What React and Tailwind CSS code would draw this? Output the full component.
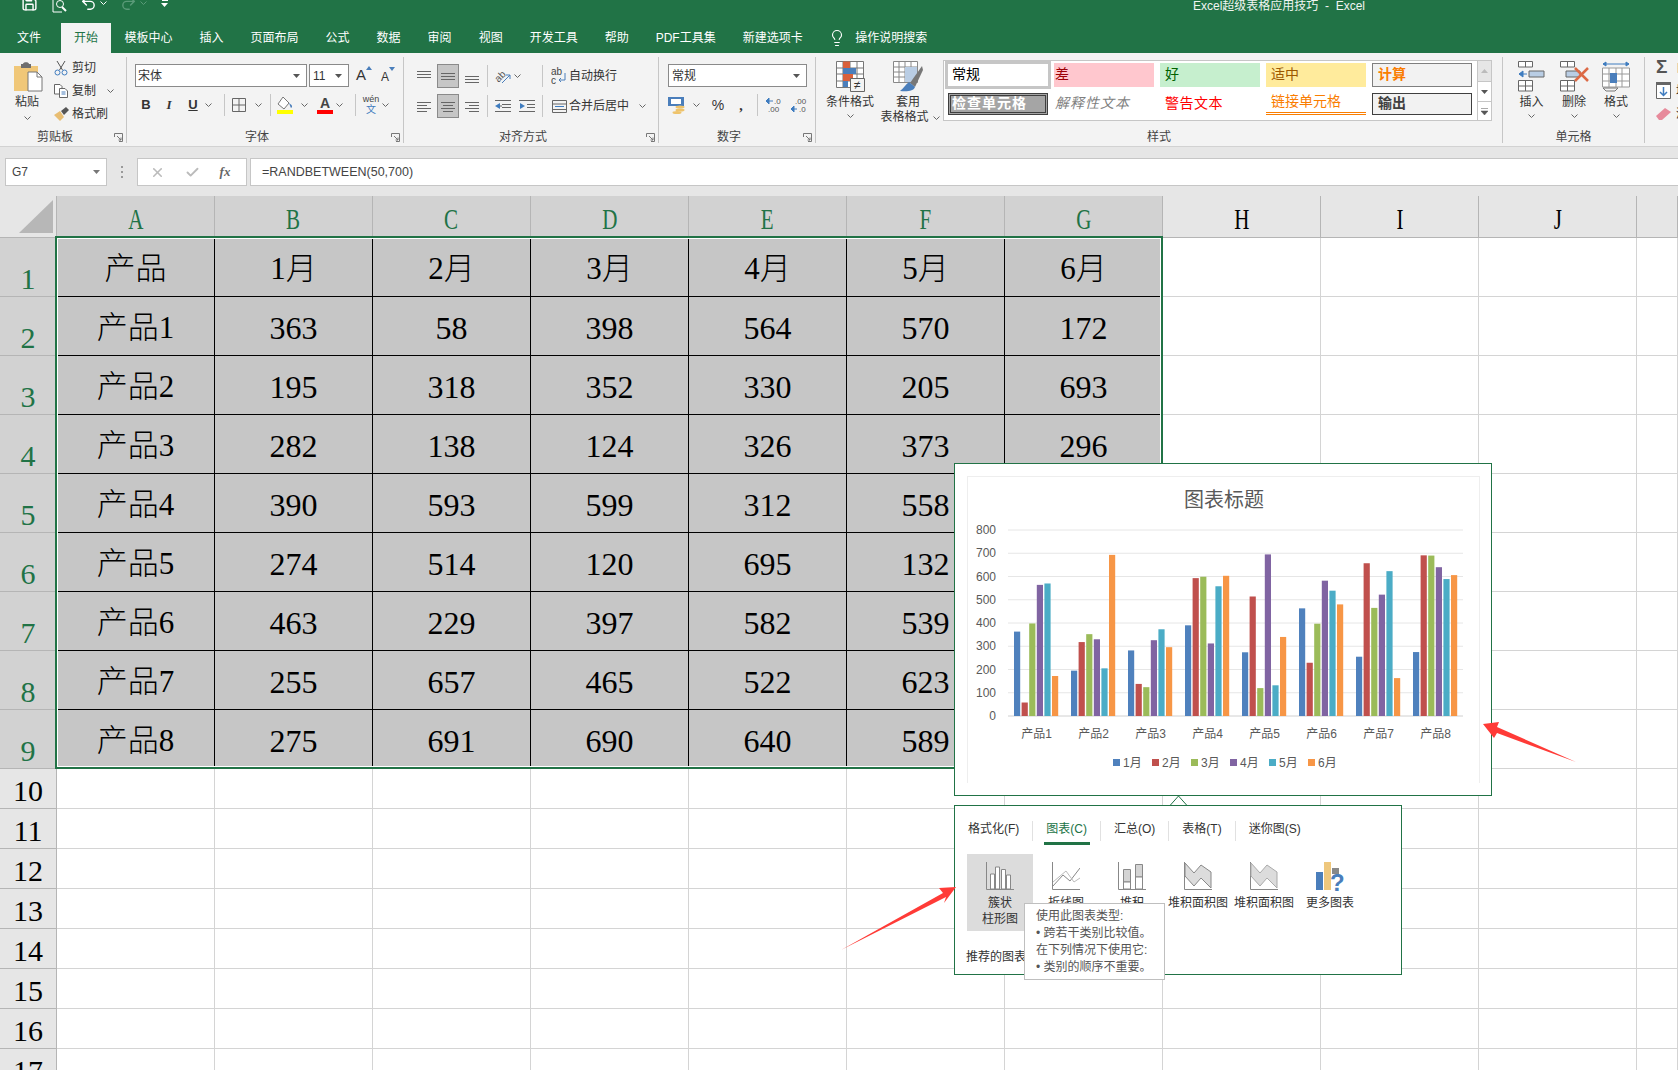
import { Save, Undo2, Redo2, Lightbulb, X, Check } from 'lucide-react'

const tabs = ['模板中心', '插入', '页面布局', '公式', '数据', '审阅', '视图', '开发工具', '帮助', 'PDF工具集', '新建选项卡']
const columns = ['A', 'B', 'C', 'D', 'E', 'F', 'G', 'H', 'I', 'J', '']
const tableData = [
  ['产品', '1月', '2月', '3月', '4月', '5月', '6月'],
  ['产品1', 363, 58, 398, 564, 570, 172],
  ['产品2', 195, 318, 352, 330, 205, 693],
  ['产品3', 282, 138, 124, 326, 373, 296],
  ['产品4', 390, 593, 599, 312, 558, 603],
  ['产品5', 274, 514, 120, 695, 132, 340],
  ['产品6', 463, 229, 397, 582, 539, 480],
  ['产品7', 255, 657, 465, 522, 623, 163],
  ['产品8', 275, 691, 690, 640, 589, 606]
]
const seriesColors = ['#4f81bd', '#c0504d', '#9bbb59', '#8064a2', '#4bacc6', '#f79646']

const Ch = ({ color = '#666' }) => (
  <svg width="7" height="4" viewBox="0 0 7 4" className="shrink-0">
    <path d="M.5.5 3.5 3.5 6.5.5" fill="none" stroke={color} />
  </svg>
)

const Sep = () => <div className="w-px h-[22px] bg-[#c6c6c6] shrink-0" />

const Launcher = () => (
  <svg width="9" height="9" viewBox="0 0 9 9" className="shrink-0">
    <path d="M.5 4V.5H8.5V8.5H5M3 3 7 7M7 4.500V7H4.500" fill="none" stroke="#777" />
  </svg>
)

function Group({ className, label, launcher, children }) {
  return (
    <div className={`flex shrink-0 h-full ${className}`}>
      <div className="flex-1 min-w-0 flex flex-col">
        <div className="h-[75px]">{children}</div>
        <div className="flex items-center h-[18px] text-[12px] text-[#444]">
          <span className="flex-1 text-center">{label}</span>
          {launcher && <span className="w-4 flex justify-center"><Launcher /></span>}
        </div>
      </div>
      <div className="w-px h-[86px] mt-[4px] bg-[#c6c6c6] shrink-0" />
    </div>
  )
}

// three horizontal text lines, used by all the align buttons
function AlignIcon({ y = 4, widths = [14, 14, 14], align = 'left' }) {
  return (
    <svg width="16" height="16" viewBox="0 0 16 16">
      {widths.map((w, i) => {
        const x = align === 'left' ? 1 : align === 'right' ? 15 - w : 8 - w / 2
        return <rect key={i} x={x} y={y + i * 3} width={w} height="1" fill="#666" />
      })}
    </svg>
  )
}

const Active = ({ children }) => (
  <div className="w-[22px] h-[24px] mx-[2px] flex items-center justify-center bg-[#c6c6c6] border border-[#8a8a8a]">{children}</div>
)
const Box = ({ children }) => <div className="w-[22px] h-[24px] flex items-center justify-center shrink-0">{children}</div>

const BigButton = ({ className, icon, lines, chev }) => (
  <div className={`flex flex-col items-center pt-[8px] text-[12px] leading-[16px] text-[#333] ${className}`}>
    <div className="h-[31px] mb-[2px] flex items-center justify-center">{icon}</div>
    {lines.map(line => <div key={line} className="whitespace-nowrap">{line}</div>)}
    {chev && <div className="mt-[4px]"><Ch /></div>}
  </div>
)

function StyleCell({ className, children }) {
  return <div className={`flex items-center whitespace-nowrap pb-[2px] ${className}`}>{children}</div>
}

function Ribbon() {
  return (
    <div className="flex h-[94px] bg-[#f3f3f3] border-b border-[#d2d2d2] overflow-hidden text-[#333]">
      <Group className="w-[127px]" label="剪贴板" launcher>
        <div className="flex">
          <div className="w-[54px] flex flex-col items-center pt-[8px] text-[12px]">
            <svg width="29" height="31" viewBox="0 0 29 31" className="ml-[3px]">
              <path d="M0 5H24V30H0Z" fill="#f0c778" />
              <path d="M7 3H9C9 .5 15 .5 15 3H17V7H7Z" fill="#6e6e6e" />
              <path d="M14 11H23L28 16V30H14Z" fill="#fff" stroke="#777" />
              <path d="M23 11V16H28" fill="none" stroke="#777" />
            </svg>
            <div className="mt-[2px] leading-[16px]">粘贴</div>
            <div className="mt-[6px]"><Ch /></div>
          </div>
          <div className="pt-[3px] text-[12px]">
            <div className="flex items-center h-[23px]">
              <div className="w-[18px]">
                <svg width="14" height="16" viewBox="0 0 14 16">
                  <path d="M3 1 8.500 10M11 1 5.500 10" stroke="#555" fill="none" />
                  <circle cx="3.500" cy="12.500" r="2.500" fill="none" stroke="#3f7cbf" />
                  <circle cx="10.500" cy="12.500" r="2.500" fill="none" stroke="#3f7cbf" />
                </svg>
              </div>
              剪切
            </div>
            <div className="flex items-center h-[23px]">
              <div className="w-[18px]">
                <svg width="15" height="14" viewBox="0 0 15 14">
                  <path d="M.5.500H6L8 2.500V10H.5Z" fill="#fff" stroke="#666" />
                  <path d="M5.500 4.500H11L13.500 7V13.500H5.500Z" fill="#fff" stroke="#666" />
                  <path d="M7.500 8H11.500M7.500 10H11.500" stroke="#4a7ebb" />
                </svg>
              </div>
              复制
              <span className="ml-[11px]"><Ch /></span>
            </div>
            <div className="flex items-center h-[23px]">
              <div className="w-[18px]">
                <svg width="16" height="14" viewBox="0 0 16 14">
                  <path d="M0 8 6 4 10 10 6 14C4 12 2 10 0 8Z" fill="#e8bd72" />
                  <path d="M7 4 12 0 15 3 10 8Z" fill="#555" />
                </svg>
              </div>
              格式刷
            </div>
          </div>
        </div>
      </Group>

      <Group className="w-[277px]" label="字体" launcher>
        <div className="pt-[11px] pl-[8px] text-[12px]">
          <div className="flex items-center h-[23px]">
            <div className="w-[172px] h-[23px] bg-white border border-[#8a8a8a] flex items-center justify-between pl-[2px] pr-[6px]">
              宋体
              <svg width="7" height="4"><path d="M0 0H7L3.500 4Z" fill="#555" /></svg>
            </div>
            <div className="w-[40px] h-[23px] ml-[2px] bg-white border border-[#8a8a8a] flex items-center justify-between pl-[3px] pr-[6px]">
              11
              <svg width="7" height="4"><path d="M0 0H7L3.500 4Z" fill="#555" /></svg>
            </div>
            <div className="w-[24px] ml-[3px] flex justify-center">
              <span className="text-[15px]">A</span><svg width="6" height="4" className="mt-[2px]"><path d="M0 4H6L3 0Z" fill="#4a7ebb" /></svg>
            </div>
            <div className="w-[24px] flex justify-center">
              <span className="text-[12px] mt-[3px]">A</span><svg width="6" height="4" className="mt-[2px]"><path d="M0 0H6L3 4Z" fill="#4a7ebb" /></svg>
            </div>
          </div>
          <div className="flex items-center h-[24px] mt-[6px] font-['Liberation_Sans',sans-serif]">
            <div className="w-[22px] text-center text-[13px] font-bold">B</div>
            <div className="w-[24px] text-center text-[13px] italic font-['Liberation_Serif',serif] font-bold">I</div>
            <div className="w-[24px] text-center text-[13px] font-bold underline">U</div>
            <div className="w-[14px]"><Ch /></div>
            <div className="w-[5px]" />
            <Sep />
            <div className="w-[3px]" />
            <Box>
              <svg width="14" height="14" viewBox="0 0 14 14">
                <path d="M.5.500H13.500V13.500H.5ZM7 .5V13.500M.5 7H13.500" fill="none" stroke="#666" />
              </svg>
            </Box>
            <div className="w-[16px] flex justify-center"><Ch /></div>
            <div className="w-[4px]" />
            <Sep />
            <div className="w-[3px]" />
            <div className="w-[22px] h-[24px] flex flex-col items-center justify-center">
              <svg width="16" height="13" viewBox="0 0 16 13">
                <path d="M6 0 12 6 7 12 1 7Z" fill="#fff" stroke="#777" />
                <path d="M12 6 14.500 8C16 10 14 12 13.500 10Z" fill="#4a7ebb" />
              </svg>
              <div className="w-[16px] h-[4px] bg-[#ffff00]" />
            </div>
            <div className="w-[16px] flex justify-center"><Ch /></div>
            <div className="w-[2px]" />
            <div className="w-[22px] h-[24px] flex flex-col items-center justify-center">
              <span className="text-[14px] leading-[13px] font-bold text-[#444]">A</span>
              <div className="w-[16px] h-[4px] bg-[#ff0000]" />
            </div>
            <div className="w-[14px]"><Ch /></div>
            <div className="w-[5px]" />
            <Sep />
            <div className="w-[4px]" />
            <div className="w-[22px] h-[24px] flex flex-col items-center text-[8px] leading-[9px] text-[#444]">
              <span className="mt-[2px] text-[9px]">wén</span>
              <span className="text-[10px] text-[#3f7cbf] font-['Noto_Sans_CJK_SC',sans-serif]">文</span>
            </div>
            <div className="w-[14px]"><Ch /></div>
          </div>
        </div>
      </Group>

      <Group className="w-[255px]" label="对齐方式" launcher>
        <div className="pt-[11px] pl-[9px] text-[12px]">
          <div className="flex items-center h-[24px]">
            <Box><AlignIcon y={3} /></Box>
            <Active><AlignIcon y={5} /></Active>
            <Box><AlignIcon y={8} /></Box>
            <div className="w-[4px]" />
            <Sep />
            <div className="w-[4px]" />
            <Box>
              <svg width="18" height="17" viewBox="0 0 18 17">
                <text x="1" y="12" fontSize="10" fill="#555" transform="rotate(-45 6 9)">ab</text>
                <path d="M8 15 16 7M16 7V11M16 7H12" stroke="#4a7ebb" fill="none" />
              </svg>
            </Box>
            <div className="w-[8px]"><Ch /></div>
            <div className="w-[20px]" />
            <Sep />
            <div className="w-[8px]" />
            <div className="w-[16px] flex justify-center">
              <svg width="16" height="18" viewBox="0 0 16 18">
                <text x="0" y="8" fontSize="10" fill="#444">ab</text>
                <text x="0" y="17" fontSize="10" fill="#444">c</text>
                <path d="M14 6V13H8M8 13 10 11M8 13 10 15" stroke="#4a7ebb" fill="none" />
              </svg>
            </div>
            <span className="ml-[2px]">自动换行</span>
          </div>
          <div className="flex items-center h-[24px] mt-[6px]">
            <Box><AlignIcon y={4} widths={[14, 10, 14, 10]} /></Box>
            <Active><AlignIcon y={4} widths={[14, 10, 14, 10]} align="center" /></Active>
            <Box><AlignIcon y={4} widths={[14, 10, 14, 10]} align="right" /></Box>
            <div className="w-[4px]" />
            <Sep />
            <div className="w-[4px]" />
            <Box>
              <svg width="16" height="12" viewBox="0 0 16 12">
                <path d="M0 6 5 3V9Z" fill="#3f7cbf" />
                <path d="M0 .5H16M7 4.500H16M7 7.500H16M0 11.500H16M5 6H7" stroke="#666" fill="none" />
              </svg>
            </Box>
            <div className="w-[2px]" />
            <Box>
              <svg width="16" height="12" viewBox="0 0 16 12">
                <path d="M6 6 1 3V9Z" fill="#3f7cbf" />
                <path d="M0 .5H16M8 4.500H16M8 7.500H16M0 11.500H16" stroke="#666" fill="none" />
              </svg>
            </Box>
            <div className="w-[4px]" />
            <Sep />
            <div className="w-[8px]" />
            <div className="w-[16px] flex justify-center">
              <svg width="15" height="13" viewBox="0 0 15 13">
                <path d="M.5.500H14.500V12.500H.5ZM.5 4H14.500M.5 9.500H14.500" fill="none" stroke="#666" />
                <path d="M3 6.500H12" stroke="#3f7cbf" />
              </svg>
            </div>
            <span className="ml-[2px] w-[60px] shrink-0">合并后居中</span>
            <span className="ml-[10px]"><Ch /></span>
          </div>
        </div>
      </Group>

      <Group className="w-[157px]" label="数字" launcher>
        <div className="pt-[11px] pl-[9px] text-[12px]">
          <div className="w-[139px] h-[23px] bg-white border border-[#8a8a8a] flex items-center justify-between pl-[3px] pr-[6px]">
            常规
            <svg width="7" height="4"><path d="M0 0H7L3.500 4Z" fill="#555" /></svg>
          </div>
          <div className="flex items-center h-[24px] mt-[6px]">
            <div className="w-[20px]">
              <svg width="18" height="18" viewBox="0 0 18 18">
                <path d="M0 1H16V10H0Z" fill="#4a7ebb" />
                <path d="M3 3H13V8H3Z" fill="#fff" />
                <ellipse cx="12" cy="11" rx="4.500" ry="1.500" fill="#eec36b" />
                <ellipse cx="12" cy="14" rx="4.500" ry="1.500" fill="#eec36b" />
                <ellipse cx="9" cy="16.500" rx="4.500" ry="1.500" fill="#eec36b" />
              </svg>
            </div>
            <div className="w-[16px] flex justify-center"><Ch /></div>
            <div className="w-[4px]" />
            <div className="w-[20px] text-center text-[14px] font-['Liberation_Sans',sans-serif]">%</div>
            <div className="w-[3px]" />
            <div className="w-[20px] text-center text-[14px] font-bold font-['Liberation_Serif',serif]">,</div>
            <div className="w-[6px]" />
            <Sep />
            <div className="w-[5px]" />
            <div className="w-[22px] flex justify-center">
              <svg width="18" height="18" viewBox="0 0 18 18">
                <path d="M1 5 4 2V8ZM4 5H8" fill="#3f7cbf" stroke="#3f7cbf" />
                <text x="9" y="8" fontSize="8" fill="#555">.0</text>
                <text x="3" y="16" fontSize="8" fill="#555">.00</text>
              </svg>
            </div>
            <div className="w-[2px]" />
            <div className="w-[22px] flex justify-center">
              <svg width="18" height="18" viewBox="0 0 18 18">
                <text x="6" y="8" fontSize="8" fill="#555">.00</text>
                <path d="M7 13 4 10V16ZM1 13H5" fill="#3f7cbf" stroke="#3f7cbf" transform="matrix(-1 0 0 1 9 0)" />
                <text x="10" y="16" fontSize="8" fill="#555">.0</text>
              </svg>
            </div>
          </div>
        </div>
      </Group>

      <Group className="w-[687px]" label="样式">
        <div className="flex pl-[5px]">
          <BigButton
            className="w-[58px]"
            lines={['条件格式']}
            chev
            icon={
              <svg width="29" height="31" viewBox="0 0 29 31">
                <path d="M.5.500H27.500V26.500H.5ZM7 .5V26.500M14 .5V20M21 .5V20M.5 7H27.500M.5 13H27.500M.5 20H27.500" fill="#fff" stroke="#777" />
                <path d="M7 .5H14V7H7Z" fill="#d9603b" />
                <path d="M7 7H20V13H7Z" fill="#4a7ebb" />
                <path d="M7 13H17V20H7Z" fill="#d9603b" />
                <path d="M7 20H12V26H7Z" fill="#4a7ebb" />
                <path d="M14.500 17.500H28.500V30.500H14.500Z" fill="#f3f3f3" stroke="#666" />
                <text x="18" y="28" fontSize="12" fill="#333">≠</text>
              </svg>
            }
          />
          <div className="w-[58px]">
            <BigButton
              lines={['套用']}
              icon={
                <svg width="30" height="31" viewBox="0 0 30 31">
                  <path d="M.5.500H24.500V21.500H.5ZM6 .5V21.500M12 .5V21.500M18 .5V21.500M.5 6H24.500M.5 11H24.500M.5 16H24.500" fill="#fff" stroke="#888" />
                  <path d="M12 6H24V21H12Z" fill="#b9cde4" />
                  <path d="M29 5 17 22 22 26 30 9Z" fill="#777" />
                  <path d="M16 21C12 24 11 27 7 30 14 31 21 30 22 26Z" fill="#4a7ebb" />
                </svg>
              }
            />
            <div className="flex items-center justify-center gap-[4px] text-[12px] leading-[15px] whitespace-nowrap pl-[4px]">表格格式<Ch /></div>
          </div>
          <div className="w-[549px] h-[61px] mt-[7px] ml-[6px] bg-white border border-[#c6c6c6] flex text-[14px]">
            <div className="flex-1 pl-[4px] pt-[2px]">
              <div className="grid grid-cols-[repeat(5,100px)] grid-rows-[24px_22px] gap-x-[6px] gap-y-[6px]">
                <StyleCell className="-mx-[3px] -my-[2px] bg-white border-[3px] border-[#c6c6c6] pl-[4px] text-black">常规</StyleCell>
                <StyleCell className="bg-[#ffc7ce] text-[#9c0006] pl-[1px]">差</StyleCell>
                <StyleCell className="bg-[#c6efce] text-[#006100] pl-[5px]">好</StyleCell>
                <StyleCell className="bg-[#ffeb9c] text-[#9c5700] pl-[5px]">适中</StyleCell>
                <StyleCell className="bg-[#f2f2f2] text-[#fa7d00] font-bold border border-[#7f7f7f] pl-[5px]">计算</StyleCell>
                <StyleCell className="bg-[#a5a5a5] text-white font-bold border-[3px] border-double border-[#3f3f3f] pl-[1px] tracking-[1px]">检查单元格</StyleCell>
                <StyleCell className="text-[#7f7f7f] italic pl-[1px] tracking-[1px]">解释性文本</StyleCell>
                <StyleCell className="text-[#ff0000] pl-[5px] tracking-[.5px]">警告文本</StyleCell>
                <StyleCell className="text-[#fa7d00] border-b-[3px] border-double border-[#fa7d00] pl-[5px]">链接单元格</StyleCell>
                <StyleCell className="bg-[#f2f2f2] text-[#3f3f3f] font-bold border border-[#3f3f3f] pl-[5px]">输出</StyleCell>
              </div>
            </div>
            <div className="w-[14px] flex flex-col border-l border-[#c6c6c6]">
              <div className="h-[21px] bg-[#e6e6e6] flex items-center justify-center border-b border-[#c6c6c6]">
                <svg width="7" height="4"><path d="M0 4H7L3.500 0Z" fill="#bbb" /></svg>
              </div>
              <div className="h-[20px] flex items-center justify-center border-b border-[#c6c6c6]">
                <svg width="7" height="4"><path d="M0 0H7L3.500 4Z" fill="#555" /></svg>
              </div>
              <div className="flex-1 flex items-center justify-center">
                <svg width="7" height="7"><path d="M0 .5H7M0 3H7L3.500 7Z" fill="#555" stroke="#555" strokeWidth=".5" /></svg>
              </div>
            </div>
          </div>
        </div>
      </Group>

      <Group className="w-[142px]" label="单元格">
        <div className="flex pl-[7px]">
          <BigButton
            className="w-[43px]"
            lines={['插入']}
            chev
            icon={
              <svg width="27" height="31" viewBox="0 0 27 31">
                <path d="M.5.500H14.500V6H.5ZM7.500.5V6M.5 19.500H14.500V30H.5ZM7.500 19.500V30M.5 25H14.500" fill="#fff" stroke="#666" />
                <path d="M11 10H26V16H11Z" fill="#b9cde4" stroke="#666" />
                <path d="M1 13H9M1 13 5 10V16Z" fill="#3f7cbf" stroke="#3f7cbf" />
              </svg>
            }
          />
          <BigButton
            className="w-[42px]"
            lines={['删除']}
            chev
            icon={
              <svg width="29" height="31" viewBox="0 0 29 31">
                <path d="M.5.500H14.500V6H.5ZM7.500.5V6M.5 19.500H14.500V30H.5ZM7.500 19.500V30M.5 25H14.500" fill="#fff" stroke="#666" />
                <path d="M6 10H20V16H6Z" fill="#b9cde4" stroke="#666" />
                <path d="M15 7 28 20M28 7 15 20" stroke="#dc6a46" strokeWidth="2.500" />
              </svg>
            }
          />
          <BigButton
            className="w-[42px]"
            lines={['格式']}
            chev
            icon={
              <svg width="28" height="31" viewBox="0 0 28 31">
                <path d="M1 3H27M1 3 4 1V5ZM27 3 24 1V5Z" stroke="#3f7cbf" fill="#3f7cbf" />
                <path d="M.5 7H27.500V26H.5ZM7 7V26M20 7V26M14 7V26M.5 13H27.500M.5 20H27.500" fill="#fff" stroke="#999" />
                <path d="M8 12H15V22H8Z" fill="#4a7ebb" />
                <path d="M1 27H16L13 30H4Z" fill="none" stroke="#777" />
              </svg>
            }
          />
        </div>
      </Group>

      <div className="pt-[2px] pl-[11px] text-[12px] whitespace-nowrap">
        <div className="flex items-center h-[23px] mt-[1px]">
          <div className="w-[20px] text-[19px] font-bold text-[#555] font-['Liberation_Sans',sans-serif]">Σ</div>自动求和
        </div>
        <div className="flex items-center h-[23px]">
          <div className="w-[20px]">
            <svg width="15" height="17" viewBox="0 0 15 17">
              <path d="M.5.500H14.500V16.500H.5Z" fill="#fff" stroke="#666" />
              <path d="M0 0H15V3H0Z" fill="#666" />
              <path d="M7.500 5V13M4 10 7.500 13.500 11 10" fill="none" stroke="#3f7cbf" strokeWidth="1.500" />
            </svg>
          </div>
          填充
        </div>
        <div className="flex items-center h-[23px]">
          <div className="w-[20px]">
            <svg width="15" height="14" viewBox="0 0 15 14">
              <path d="M0 9 9 1 15 5 6 13 3 13Z" fill="#e78a9b" />
            </svg>
          </div>
          清除
        </div>
      </div>
    </div>
  )
}

function FormulaBar() {
  return (
    <div className="flex h-[49px] pt-[11px] pl-[5px] bg-[#e6e6e6] text-[12px]">
      <div className="w-[102px] h-[28px] bg-white border border-[#c6c6c6] flex items-center justify-between pl-[6px] pr-[6px] text-[#444]">
        G7
        <svg width="7" height="4"><path d="M0 0H7L3.500 4Z" fill="#777" /></svg>
      </div>
      <div className="w-[30px] h-[28px] flex flex-col items-center justify-center gap-[3px]">
        <div className="w-[2px] h-[2px] bg-[#999]" />
        <div className="w-[2px] h-[2px] bg-[#999]" />
        <div className="w-[2px] h-[2px] bg-[#999]" />
      </div>
      <div className="w-[110px] h-[28px] bg-white border border-[#c6c6c6] flex items-center text-[#bbb]">
        <div className="w-[22px] ml-[8px] flex justify-center"><X size={15} strokeWidth={2.500} /></div>
        <div className="w-[36px] ml-[6px] flex justify-center"><Check size={15} strokeWidth={3} /></div>
        <div className="w-[30px] text-center text-[#666] italic font-bold font-['Liberation_Serif',serif] text-[13px]">fx</div>
      </div>
      <div className="flex-1 ml-[3px] h-[28px] bg-white border border-[#c6c6c6] border-r-0 flex items-center pl-[11px] text-[#444] text-[12.500px]">
        =RANDBETWEEN(50,700)
      </div>
    </div>
  )
}

const Letter = ({ children }) => (
  <span className="inline-block text-[30px] leading-[36px] scale-x-[0.7] font-['Liberation_Serif',serif]">{children}</span>
)

function Sheet() {
  const rows = Array.from({ length: 17 }, (_, i) => i + 1)
  return (
    <div className="relative flex-1 overflow-hidden font-['Liberation_Serif','Noto_Sans_CJK_SC',serif] text-black">
      <div className="grid grid-cols-[57px_repeat(10,158px)_41px] grid-rows-[42px_repeat(9,59px)_repeat(8,40px)] bg-white">
        <div className="bg-[#e6e6e6] border-r border-b border-[#b5b5b5] flex items-end justify-end pr-[3px] pb-[4px]">
          <svg width="34" height="33"><path d="M34 0V33H0Z" fill="#b7b7b7" /></svg>
        </div>
        {columns.map((c, i) => (
          <div
            key={i}
            className={`flex items-end justify-center border-r border-b border-[#b5b5b5] ${i < 7 ? 'bg-[#d2d2d2] text-[#217346]' : 'bg-[#e6e6e6]'}`}
          >
            <Letter>{c}</Letter>
          </div>
        ))}
        {rows.map(r => (
          <Row key={r} r={r} />
        ))}
      </div>
      <div className="absolute left-[55px] top-[40px] w-[1108px] h-[533px] border-2 border-[#217346] shadow-[inset_0_0_0_1px_#fff] pointer-events-none" />
    </div>
  )
}

function Row({ r }) {
  const data = tableData[r - 1]
  return (
    <>
      <div
        className={`flex items-end justify-center border-r border-b border-[#b5b5b5] text-[30px] leading-[34px] ${data ? 'bg-[#d2d2d2] text-[#217346]' : 'bg-[#e6e6e6]'}`}
      >
        {r}
      </div>
      {columns.map((_, i) => {
        const v = data && data[i]
        if (v !== undefined && v !== null) {
          // column G from row 5 down sits behind the chart popup
          const hidden = i === 6 && r >= 5
          return (
            <div
              key={i}
              className={`flex items-center justify-center bg-[#c6c6c6] border-r border-b border-black whitespace-nowrap ${typeof v === 'number' ? 'text-[32px] pt-[3px]' : 'text-[31px] pt-[5px] font-light'}`}
            >
              {hidden ? '' : v}
            </div>
          )
        }
        return <div key={i} className="border-r border-b border-[#d4d4d4]" />
      })}
    </>
  )
}

function ChartPopup() {
  const yFor = v => 716 - v * 0.2325
  return (
    <div className="absolute left-[954px] top-[463px] w-[538px] h-[333px] p-[12px] bg-white border border-[#217346]">
      <div className="w-[513px] h-[307px] border border-[#eeeeee] border-b-0">
        <svg width="511" height="306" viewBox="968 477 511 306" className="block">
          <text x="1224" y="507" textAnchor="middle" fontSize="20" fill="#595959">图表标题</text>
          {[0, 100, 200, 300, 400, 500, 600, 700, 800].map(v => (
            <g key={v}>
              <line x1="1008" x2="1463" y1={yFor(v)} y2={yFor(v)} stroke={v === 0 ? '#d0d0d0' : '#e6e6e6'} />
              <text x="996" y={yFor(v) + 4} textAnchor="end" fontSize="12" fill="#595959">{v}</text>
            </g>
          ))}
          {tableData.slice(1).map((row, g) => (
            <g key={g}>
              {row.slice(1).map((v, s) => (
                <rect key={s} x={1014 + g * 57 + s * 7.600} y={yFor(v)} width="6.200" height={716 - yFor(v)} fill={seriesColors[s]} />
              ))}
              <text x={1036.500 + g * 57} y="738" textAnchor="middle" fontSize="12" fill="#595959">{row[0]}</text>
            </g>
          ))}
          {tableData[0].slice(1).map((m, s) => (
            <g key={m}>
              <rect x={1113 + s * 39} y="759" width="7" height="7" fill={seriesColors[s]} />
              <text x={1123 + s * 39} y="767" fontSize="12" fill="#595959">{m}</text>
            </g>
          ))}
        </svg>
      </div>
    </div>
  )
}

const chartTypes = [
  {
    lines: ['簇状', '柱形图'],
    icon: (
      <svg width="28" height="28" viewBox="0 0 28 28">
        <path d="M.5 0V27.500H28" fill="none" stroke="#888" />
        <path d="M4.500 27V12H8.500V27ZM9.500 27V5H13.500V27ZM15.500 27V7.500H19.500V27ZM20.500 27V13H24.500V27Z" fill="#fff" stroke="#888" />
      </svg>
    )
  },
  {
    lines: ['折线图'],
    icon: (
      <svg width="28" height="28" viewBox="0 0 28 28">
        <path d="M.5 0V27.500H28" fill="none" stroke="#888" />
        <path d="M1 24 11 13 18 19 28 6" fill="none" stroke="#888" />
        <path d="M1 20 14 9 22 20 28 16" fill="none" stroke="#bbb" />
      </svg>
    )
  },
  {
    lines: ['堆积'],
    icon: (
      <svg width="28" height="28" viewBox="0 0 28 28">
        <path d="M.5 0V27.500H28" fill="none" stroke="#888" />
        <path d="M5.500 7.500H12.500V20H5.500ZM17.500 2.500H24.500V15H17.500Z" fill="#d4d4d4" stroke="#888" />
        <path d="M5.500 20H12.500V27H5.500ZM17.500 15H24.500V27H17.500Z" fill="#fff" stroke="#888" />
      </svg>
    )
  },
  {
    lines: ['堆积面积图'],
    icon: (
      <svg width="28" height="28" viewBox="0 0 28 28">
        <path d="M.5 0V27.500H28" fill="none" stroke="#888" />
        <path d="M1 1 10 11 17 3 27 10V26L17 16 10 24 1 14Z" fill="#dcdcdc" stroke="#888" />
      </svg>
    )
  },
  {
    lines: ['堆积面积图'],
    icon: (
      <svg width="28" height="28" viewBox="0 0 28 28">
        <path d="M.5 0V27.500H28" fill="none" stroke="#888" />
        <path d="M1 1 10 11 17 3 27 10V26L17 16 10 24 1 14Z" fill="#dcdcdc" stroke="#aaa" />
      </svg>
    )
  },
  {
    lines: ['更多图表'],
    icon: (
      <svg width="28" height="30" viewBox="0 0 28 30">
        <path d="M0 10H7V28H0Z" fill="#4a7ebb" />
        <path d="M8 0H15V28H8Z" fill="#eec77d" />
        <path d="M16 6H23V12H16Z" fill="#888" />
        <text x="14" y="29" fontSize="24" fontWeight="bold" fill="#4a7ebb">?</text>
      </svg>
    )
  }
]

const panelTabs = ['格式化(F)', '图表(C)', '汇总(O)', '表格(T)', '迷你图(S)']

function QuickPanel() {
  return (
    <div className="absolute left-[954px] top-[805px] w-[448px] h-[170px] bg-white border border-[#217346] text-[12px] text-[#333]">
      <div className="flex items-start pt-[15px] pl-[13px] h-[48px]">
        {panelTabs.map((t, i) => (
          <div key={t} className="flex">
            <div className={`relative h-[23px] leading-[16px] whitespace-nowrap ${i === 1 ? 'text-[#217346]' : ''}`}>
              {t}
              {i === 1 && <div className="absolute left-[-2px] right-[-3px] bottom-[-1px] h-[3px] bg-[#217346]" />}
            </div>
            {i < 4 && <div className="w-px h-[20px] mx-[13px] bg-[#e1e1e1]" />}
          </div>
        ))}
      </div>
      <div className="flex pl-[12px]">
        {chartTypes.map((c, i) => (
          <div key={i} className={`w-[66px] h-[77px] flex flex-col items-center pt-[8px] leading-[16px] whitespace-nowrap ${i === 0 ? 'bg-[#dcdcdc]' : ''}`}>
            <div className="h-[33px]">{c.icon}</div>
            {c.lines.map(l => <div key={l}>{l}</div>)}
          </div>
        ))}
      </div>
      <div className="pl-[11px] mt-[18px] leading-[16px] whitespace-nowrap">推荐的图表</div>
    </div>
  )
}

function Tooltip() {
  return (
    <div className="absolute left-[1024px] top-[903px] w-[141px] h-[77px] pl-[11px] pt-[4px] bg-white border border-[#bfbfbf] text-[12px] leading-[17px] text-[#555] whitespace-nowrap">
      <div>使用此图表类型:</div>
      <div>• 跨若干类别比较值。</div>
      <div>在下列情况下使用它:</div>
      <div>• 类别的顺序不重要。</div>
    </div>
  )
}

export default function App() {
  return (
    <div className="relative w-[1678px] h-[1070px] overflow-hidden flex flex-col bg-white font-['Liberation_Sans','Noto_Sans_CJK_SC',sans-serif]">
      <div className="h-[53px] shrink-0 bg-[#217346] text-white flex flex-col text-[12px]">
        <div className="h-[23px] relative overflow-hidden flex items-start">
          <div className="flex items-start -mt-[5px] pl-[21px] text-white">
            <Save size={17} />
            <svg width="16" height="18" viewBox="0 0 16 18" className="ml-[14px]" fill="none" stroke="#fff">
              <path d="M1 .5V17H10M1 .5H9" />
              <circle cx="8" cy="9" r="3.500" />
              <path d="M10 12 14 16" strokeWidth="2" />
            </svg>
            <Undo2 size={17} className="ml-[12px]" />
            <span className="ml-[3px] mt-[6px]"><Ch color="#fff" /></span>
            <Redo2 size={17} className="ml-[13px] text-[#5a9a78]" />
            <span className="ml-[3px] mt-[6px]"><Ch color="#5a9a78" /></span>
            <span className="ml-[14px] mt-[5px] flex flex-col items-center gap-[2px]">
              <span className="w-[6px] h-px bg-white" />
              <svg width="7" height="4"><path d="M0 0H7L3.500 4Z" fill="#fff" /></svg>
            </span>
          </div>
          <div className="ml-[1025px] whitespace-pre text-[#f0f5f2] text-[12px] leading-[13px]">Excel超级表格应用技巧  -  Excel</div>
        </div>
        <div className="flex h-[30px] pl-[3px] text-[12px]">
          <div className="px-[14px] flex items-center pb-[1px]">文件</div>
          <div className="ml-[6px] px-[13px] flex items-center pb-[1px] bg-[#f3f3f3] text-[#217346]">开始</div>
          {tabs.map(t => (
            <div key={t} className="px-[13.500px] flex items-center pb-[1px] whitespace-nowrap">{t}</div>
          ))}
          <div className="flex items-center pb-[1px] ml-[12px] whitespace-nowrap">
            <Lightbulb size={18} strokeWidth={1.500} className="mr-[9px]" />
            操作说明搜索
          </div>
        </div>
      </div>
      <Ribbon />
      <FormulaBar />
      <Sheet />
      <ChartPopup />
      <svg width="18" height="11" viewBox="0 0 18 11" className="absolute left-[1170px] top-[795px]">
        <path d="M0 10.500 8.500 1 17 10.500" fill="#fff" stroke="#217346" />
        <path d="M1 10H16V11H1Z" fill="#fff" />
      </svg>
      <QuickPanel />
      <Tooltip />
      <svg width="1678" height="1070" viewBox="0 0 1678 1070" className="absolute left-0 top-0 pointer-events-none">
        <path d="M1483 724 1499 722 1497 727 1576 762 1497 733 1494 738Z" fill="#ff3b37" />
        <path d="M956 887 939 888 943 893 841 950 946 897 944 903Z" fill="#ff3b37" />
      </svg>
    </div>
  )
}
